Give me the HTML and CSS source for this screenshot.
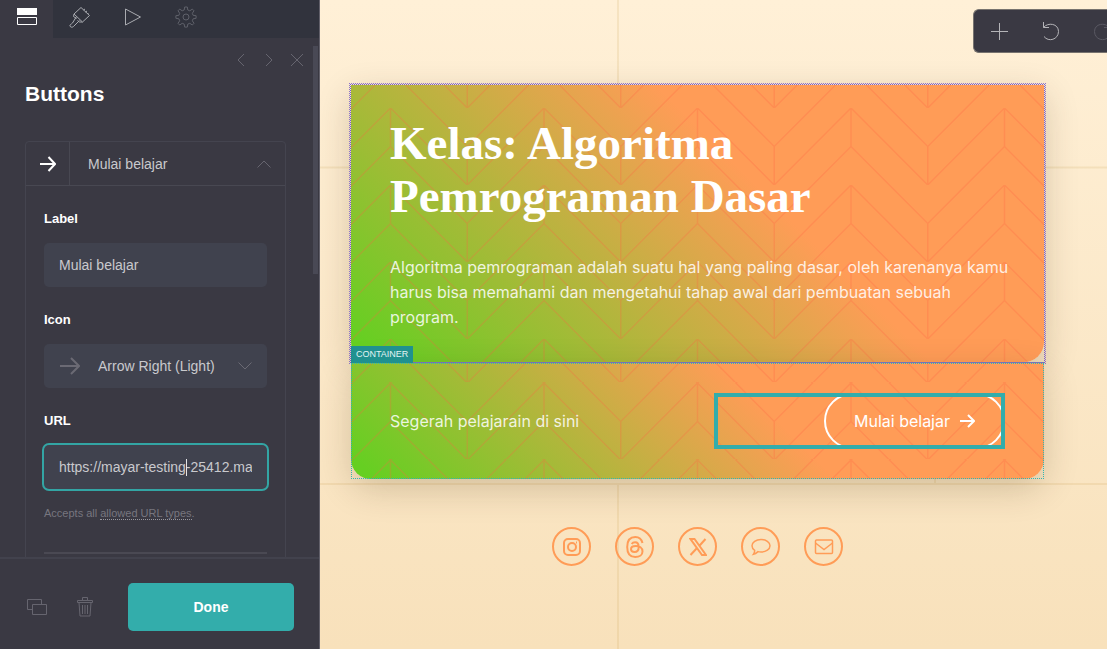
FILE: index.html
```
<!DOCTYPE html>
<html lang="id">
<head>
  <meta charset="UTF-8" />
  <meta name="viewport" content="width=device-width, initial-scale=1" />
  <title>Kelas: Algoritma Pemrograman Dasar</title>
  <link rel="stylesheet" href="styles.css">
</head>
<body>
  <aside class="panel">
    <nav class="tabs">
      <button class="tab active" type="button" aria-label="Elements">
        <svg width="20" height="18" viewBox="0 0 20 18"><path d="M0 0h20v7H0z" fill="#fff"/><path d="M.5 9.500h19v7H.5z" fill="none" stroke="#fff"/></svg>
      </button>
      <button class="tab" type="button" aria-label="Styles">
        <svg class="line" width="22" height="22" viewBox="0 0 22 22"><path d="M12 1.500l8.500 8-7 6.500-8.500-8zM7.500 10.500l-4 6.500c-1.500 1.500-3 1.500-2.500 3s2.500 1.500 3.500.5l6-6M14.500 4l1.500-1M16.500 6l1.500-1M18.500 8l1-1M5 8l-.5 2.500 3 2M13.500 16h-3l-2-1.500"/></svg>
      </button>
      <button class="tab" type="button" aria-label="Animations">
        <svg class="line" width="18" height="18" viewBox="0 0 18 18"><path d="M1.500 1l15 8-15 8z"/></svg>
      </button>
      <button class="tab dim" type="button" aria-label="Settings">
        <svg class="line" width="22" height="22" viewBox="0 0 22 22"><circle cx="11" cy="11" r="3"/><path d="M9.700 1h2.600l.5 3 2 .8 2.500-1.700 1.700 1.700-1.700 2.500.8 2 3 .4v2.600l-3 .5-.8 2 1.700 2.500-1.700 1.700-2.500-1.700-2 .8-.5 3H9.700l-.5-3-2-.8L4.700 19 3 17.300l1.700-2.500-.8-2-3-.5V9.700l3-.4.8-2L3 4.800l1.700-1.700 2.500 1.700 2-.8z"/></svg>
      </button>
    </nav>

    <div class="panel-body">
      <div class="panel-content">
        <div class="panel-nav">
          <button type="button" aria-label="Previous"><svg class="line" width="14" height="14" viewBox="0 0 14 14"><path d="M10 1L4 7l6 6"/></svg></button>
          <button type="button" aria-label="Next"><svg class="line" width="14" height="14" viewBox="0 0 14 14"><path d="M4 1l6 6-6 6"/></svg></button>
          <button type="button" aria-label="Close"><svg class="line" width="14" height="14" viewBox="0 0 14 14"><path d="M1 1l12 12M13 1L1 13"/></svg></button>
        </div>
        <h2>Buttons</h2>

        <div class="item">
          <button class="item-head" type="button">
            <span class="item-icon"><svg width="16" height="16" viewBox="0 0 16 16" fill="none" stroke="#fff" stroke-width="2"><path d="M0 8h15M8.500 1l6.500 7-6.500 7"/></svg></span>
            <span class="item-name">Mulai belajar</span>
            <svg class="line" width="14" height="8" viewBox="0 0 14 8"><path d="M.5 7.500L7 1l6.500 6.500"/></svg>
          </button>
          <div class="fields">
            <label for="label">Label</label>
            <input class="field" type="text" id="label" value="Mulai belajar" />

            <label for="icon">Icon</label>
            <div class="select">
              <svg class="select-icon" width="20" height="18" viewBox="0 0 20 18"><path d="M0 9h19M11 1l8 8-8 8"/></svg>
              <select class="field" id="icon">
                <option>Arrow Right (Light)</option>
              </select>
              <svg class="line select-arrow" width="14" height="8" viewBox="0 0 14 8"><path d="M.5.5L7 7 13.500.5"/></svg>
            </div>

            <label for="url">URL</label>
            <div class="url">
              <input class="field focused" type="text" id="url" value="https://mayar-testing-25412.mayar.link" />
            </div>
            <p class="help">Accepts all <a href="#">allowed URL types</a>.</p>
            <hr>
          </div>
        </div>
      </div>
      <div class="scrollbar"></div>
    </div>

    <footer class="panel-footer">
      <button class="tool" type="button" aria-label="Duplicate">
        <svg class="line" width="20" height="16" viewBox="0 0 20 16"><path d="M5 10.500H.5v-10h14V5M5.500 5.500h14v10h-14z"/></svg>
      </button>
      <button class="tool" type="button" aria-label="Delete">
        <svg class="line" width="16" height="20" viewBox="0 0 16 20"><path d="M.5 3.500h15v2H.5zM5.500 3.500v-3h5v3M2 5.500l1 13.500h10l1-13.500M5.500 8v9M8 8v9M10.500 8v9"/></svg>
      </button>
      <button class="done" type="button">Done</button>
    </footer>
  </aside>

  <main class="preview">
    <div class="toolbar">
      <button type="button" aria-label="Add"><svg width="17" height="17" viewBox="0 0 17 17"><path d="M8.500 0v17M0 8.500h17"/></svg></button>
      <button type="button" aria-label="Undo"><svg width="18" height="19" viewBox="0 0 18 19"><path d="M1.500 0v5.500h5.500M1.500 5.500C6 0 16.500 1.500 16.500 9.500c0 8-10 11-14.500 5"/></svg></button>
      <button class="off" type="button" aria-label="Redo"><svg width="18" height="19" viewBox="0 0 18 19"><path d="M16.500 0v5.500H11M16.500 5.500C12 0 1.500 1.500 1.500 9.500c0 8 10 11 14.500 5"/></svg></button>
    </div>

    <section class="block block-main">
      <div class="card card-text">
        <h1>Kelas: Algoritma Pemrograman Dasar</h1>
        <p>Algoritma pemrograman adalah suatu hal yang paling dasar, oleh karenanya kamu harus bisa memahami dan mengetahui tahap awal dari pembuatan sebuah program.</p>
      </div>
    </section>

    <section class="block block-container">
      <span class="tag">CONTAINER</span>
      <div class="card card-row">
        <p>Segerah pelajarain di sini</p>
        <div class="selected">
          <a class="pill" href="#">Mulai belajar
            <svg width="15" height="14" viewBox="0 0 15 14"><path d="M0 7h14M8 1l6 6-6 6"/></svg>
          </a>
        </div>
      </div>
    </section>

    <nav class="social">
      <a href="#" aria-label="Instagram"><svg width="20" height="20" viewBox="0 0 20 20"><rect x="2" y="2" width="16" height="16" rx="4"/><circle cx="10" cy="10" r="4"/><path d="M14 5.500h1"/></svg></a>
      <a href="#" aria-label="Threads"><svg width="20" height="22" viewBox="0 0 20 22"><path d="M17.500 7C16.500 3 14 1 10.300 1 5 1 2.200 4.700 2.200 11s2.800 10 8 10c4.300 0 7.300-2.300 7.300-5.600 0-3.700-3.200-5.400-6.700-5.400-3 0-4.800 1.200-4.800 3.200 0 1.700 1.500 2.700 3.500 2.700 2.700 0 4.200-1.800 4.200-5 0-3-1.200-4.600-3.600-4.600-1.500 0-2.700.6-3.400 1.800"/></svg></a>
      <a href="#" aria-label="X"><svg width="18" height="18" viewBox="0 0 18 18"><path d="M1.500 1h4L17 17h-4zM16.500 1l-6.300 7M7.800 10.300L1.500 17"/></svg></a>
      <a href="#" aria-label="Comment"><svg class="thin" width="20" height="18" viewBox="0 0 20 18"><path d="M10 1.500c5 0 9 2.700 9 6.200S15 14 10 14c-1 0-2-.1-3-.4C5.500 15 4 16 2.500 16.300c.8-1 1.200-2.500 1.200-4C2 11.200 1 9.500 1 7.700c0-3.500 4-6.200 9-6.200z"/></svg></a>
      <a href="#" aria-label="Email"><svg class="thin" width="20" height="18" viewBox="0 0 20 18"><rect x="1.500" y="2" width="17" height="13.500" rx="1"/><path d="M1.500 5l8.500 6.500L18.500 5"/></svg></a>
    </nav>
  </main>
</body>
</html>
```
FILE: styles.css
```
* {
  box-sizing: border-box;
}
body {
  margin: 0;
  display: flex;
  min-height: 100vh;
  font-family: "Liberation Sans", Arial, sans-serif;
  background-color: #f9e4c0;
}
button {
  padding: 0;
  border: none;
  background: none;
  font-family: inherit;
  color: inherit;
  cursor: pointer;
}
svg {
  display: block;
  flex: none;
}
.line {
  fill: none;
  stroke: currentColor;
}

/* left panel */
.panel {
  flex: none;
  width: 320px;
  height: 100vh;
  display: flex;
  flex-direction: column;
  background-color: #3a3943;
  border-right: 1px solid #62606a;
  color: #c9c9cd;
}
.tabs {
  flex: none;
  display: flex;
  height: 38px;
  background-color: #31333d;
}
.tab {
  width: 53px;
  display: flex;
  justify-content: center;
  align-items: center;
  padding-bottom: 5px;
  color: #a9abb0;
}
.tab.active {
  background-color: #3a3943;
}
.tab.dim {
  color: #5f616a;
}
.panel-body {
  flex: 1;
  min-height: 0;
  display: flex;
  overflow: hidden;
}
.panel-content {
  flex: 1;
  padding: 15px 27px 0 25px;
}
.scrollbar {
  width: 5px;
  height: 228px;
  margin: 8px 1px 0 0;
  background-color: #494955;
}
.panel-nav {
  display: flex;
  justify-content: flex-end;
  gap: 14px;
  margin-right: -18px;
  color: #66656f;
}
h2 {
  margin: 13px 0 33px;
  font-size: 21px;
  line-height: 28px;
  color: #fff;
}
.item {
  border: 1px solid #44444f;
  border-radius: 4px;
}
.item-head {
  width: 100%;
  height: 44px;
  display: flex;
  align-items: center;
  padding-right: 14px;
  border-bottom: 1px solid #484852;
  color: #66656f;
}
.item-icon {
  width: 44px;
  height: 43px;
  display: flex;
  align-items: center;
  justify-content: center;
  border-right: 1px solid #484852;
}
.item-name {
  flex: 1;
  padding-left: 18px;
  text-align: left;
  font-size: 14px;
  color: #c9c9cd;
}
.fields {
  padding: 23px 18px 40px;
}
.fields label {
  display: block;
  margin-bottom: 14px;
  font-size: 13px;
  line-height: 20px;
  font-weight: bold;
  color: #fff;
}
.field {
  display: block;
  width: 100%;
  height: 44px;
  margin-bottom: 23px;
  padding: 0 15px;
  border: none;
  border-radius: 5px;
  outline: none;
  appearance: none;
  background-color: #40424e;
  font-family: inherit;
  font-size: 14px;
  color: #c9c9cd;
}
.select {
  display: grid;
  align-items: center;
  margin-bottom: 23px;
  color: #6b6a74;
}
.select > * {
  grid-area: 1 / 1;
}
.select .field {
  margin: 0;
  padding-left: 54px;
}
.select-icon {
  z-index: 1;
  margin-left: 16px;
  fill: none;
  stroke: currentColor;
  stroke-width: 2;
}
.select-arrow {
  justify-self: end;
  margin-right: 15px;
}
.url {
  position: relative;
}
.field.focused {
  margin-bottom: 14px;
  box-shadow: 0 0 0 2px #33a5a4;
}
/* text caret */
.url::after {
  content: "";
  position: absolute;
  left: 142px;
  top: 14px;
  width: 1px;
  height: 17px;
  background-color: #e4e4e6;
}
.help {
  margin: 0 0 29px;
  font-size: 11px;
  line-height: 20px;
  color: #77767f;
}
.help a {
  color: inherit;
  text-decoration: none;
  border-bottom: 1px dotted #97969e;
}
hr {
  margin: 0;
  border: none;
  border-top: 2px solid #4a4953;
}
.panel-footer {
  flex: none;
  display: flex;
  align-items: center;
  padding: 24px 25px 18px 27px;
  border-top: 2px solid #42424d;
}
.tool {
  width: 20px;
  margin-right: 28px;
  display: flex;
  justify-content: center;
  color: #66656f;
}
.done {
  flex: 1;
  height: 48px;
  margin-left: 5px;
  border-radius: 5px;
  background-color: #33adab;
  font-size: 14px;
  font-weight: bold;
  color: #fff;
}

/* page preview */
.preview {
  flex: 1;
  min-width: 0;
  position: relative;
  overflow: hidden;
  padding: 85px 63px 0 31px;
  font-family: Inter, sans-serif;
  background:
    url("data:image/svg+xml,%3Csvg xmlns='http://www.w3.org/2000/svg' width='634' height='634'%3E%3Cpath d='M0 167.500H634M0 484H634M298 0V167M298 485V634M615 168V484' fill='none' stroke='%23c8a050' stroke-opacity='.17' stroke-width='2'/%3E%3C/svg%3E") 0 0,
    linear-gradient(#fff0d7, #f8e1bb);
}
.toolbar {
  position: absolute;
  top: 9px;
  right: -20px;
  display: flex;
  height: 44px;
  border: 1px solid #77736f;
  border-right: none;
  border-radius: 6px;
  background-color: #3a3943;
  color: #b4b4b8;
}
.toolbar button {
  width: 51px;
  display: flex;
  align-items: center;
  justify-content: center;
}
.toolbar .off {
  color: #5a5963;
}
.toolbar svg,
.pill svg {
  fill: none;
  stroke: currentColor;
}
.block {
  position: relative;
}
/* editor outlines */
.block::after {
  content: "";
  position: absolute;
  inset: 0;
  border: 1px dotted #33b5b4;
  pointer-events: none;
}
.block-main {
  outline: 1px dotted #8e74c9;
  outline-offset: 1px;
}
.block-main::after {
  inset: -1px;
  border-color: #7a5fd0;
}
.block-container {
  border-top: 1px solid #7678c0;
}
.card {
  padding: 32px 39px;
  border-radius: 0 0 20px 20px;
  box-shadow: 0 10px 35px rgba(60, 40, 0, 0.2);
  background:
    url("data:image/svg+xml,%3Csvg xmlns='http://www.w3.org/2000/svg' width='307' height='77' viewBox='0 0 307 77'%3E%3Cg fill='none' stroke='%23ff6040' stroke-opacity='.25' stroke-width='1.500'%3E%3Cpath d='M0 0L76.750 77 153.500 0 230.250 77 307 0M0 38.500L76.750 115.500 153.500 38.500 230.250 115.500 307 38.500M0-38.500L76.750 38.500 153.500-38.500 230.250 38.500 307-38.500M0 0V38.500M153.500 0V38.500M307 0V38.500M76.750 38.500V77M230.250 38.500V77'/%3E%3C/g%3E%3C/svg%3E") center,
    linear-gradient(45deg, #66cf22 3%, #ff9c57 60%);
  color: #fff;
}
.card p {
  margin: 0;
  font-size: 16px;
  line-height: 25px;
  color: rgba(255, 255, 255, 0.85);
}
h1 {
  margin: 0 0 32px;
  font-family: "Liberation Serif", "Times New Roman", serif;
  font-size: 47px;
  line-height: 53px;
  font-weight: bold;
}
.card-text {
  padding-right: 30px;
}
.card-row {
  display: grid;
  grid-template-columns: 1fr 1fr;
  align-items: center;
  gap: 32px;
  padding: 30px 39px;
}
.tag {
  position: absolute;
  left: 0;
  bottom: 100%;
  z-index: 1;
  padding: 0 5px;
  font-family: "Liberation Sans", Arial, sans-serif;
  font-size: 9px;
  line-height: 17px;
  background-color: #20918f;
  color: #e3f4f3;
}
.selected {
  position: relative;
  display: flex;
  justify-content: flex-end;
}
.selected::after {
  content: "";
  position: absolute;
  inset: 0;
  border: 4px solid #33adab;
  pointer-events: none;
}
.pill {
  display: flex;
  align-items: center;
  gap: 10px;
  height: 56px;
  padding: 0 28px;
  border: 2px solid #fff;
  border-radius: 28px;
  font-size: 16px;
  color: #fff;
  text-decoration: none;
}
.pill svg {
  stroke-width: 2;
}
.social {
  display: flex;
  justify-content: center;
  gap: 24px;
  margin-top: 48px;
}
.social a {
  width: 39px;
  height: 39px;
  display: flex;
  align-items: center;
  justify-content: center;
  border: 2px solid #ff9c57;
  border-radius: 50%;
}
.social svg {
  fill: none;
  stroke: #ff9c57;
  stroke-width: 2;
}
.social .thin {
  stroke-width: 1.5;
}
```
